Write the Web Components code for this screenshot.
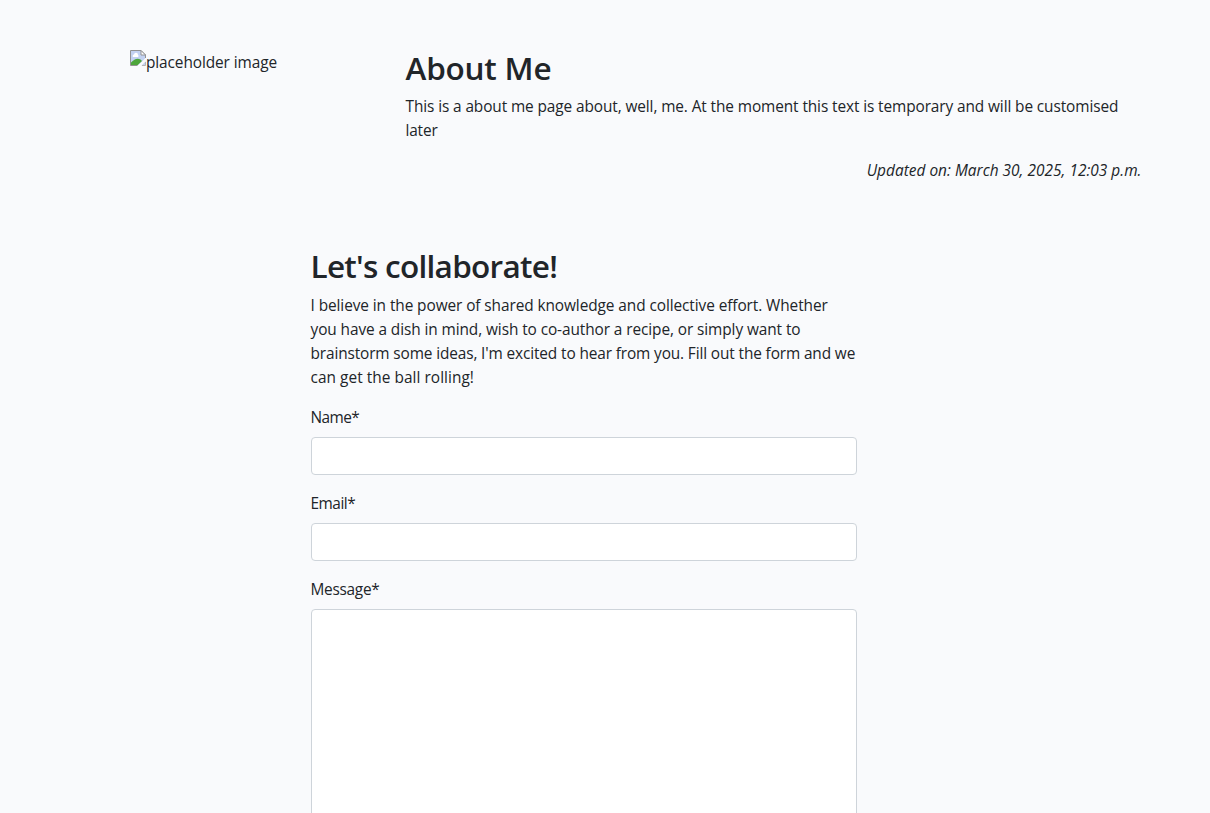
<!DOCTYPE html>
<html lang="en"><head><meta charset="utf-8"><title>About Me</title>
<style>body{margin:0;background:#f9fafc}</style></head><body>
<about-page></about-page>
<script>
const define=(name,html)=>{const t=document.createElement('template');t.innerHTML=html;
customElements.define(name,class extends HTMLElement{constructor(){super();this.attachShadow({mode:'open'}).append(t.content.cloneNode(true));}});};
define('text-line','<style>:host{display:block;white-space:nowrap}</style><slot></slot>');
define('page-heading','<style>:host{display:block;padding-top:1px;margin-bottom:7px}h2{margin:0;font-size:31.5px;line-height:38.4px;font-weight:600;white-space:nowrap}</style><h2><slot></slot></h2>');
define('missing-image',`<style>:host{display:flex;align-items:flex-start;line-height:24px;white-space:nowrap}svg{flex:none;display:block}::slotted(*){padding-top:1px}</style>
<svg width="16" height="16" viewBox="0 0 16 16"><path d="M.5.5H11L15.5 5V15.5H.5Z" fill="#c2d1f1"/><path d="M3 7a1.5 1.5 0 0 1 1-2.5 2 2 0 0 1 4 .5 1.2 1.2 0 0 1 0 2Z" fill="#fff"/><path d="M1 15V12.5Q6 7 10.500 9.500L12 11 8 15Z" fill="#4da53b"/><path d="M16 7.500V11L11 16H7L11.500 12Z" fill="#f9fafc"/><path d="M7.500 15.500H.5V.5H11L15.500 5V8" fill="none" stroke="#929292"/><path d="M11 .5V5H15.500Z" fill="#fff" stroke="#929292"/><path d="M12 15.500H15.500V12" fill="none" stroke="#b5b5b5"/></svg><slot></slot>`);
define('form-field',`<style>:host{display:block;margin-bottom:16px}label{display:block;line-height:24px;padding-top:1px;margin-bottom:7px}input,textarea{display:block;box-sizing:border-box;width:100%;height:38px;border:1px solid #ced4da;border-radius:4px;background:#fff;padding:6px 12px;margin:0;font:inherit;outline:0;resize:none}:host([multiline]) input,textarea{display:none}:host([multiline]) textarea{display:block;height:250px}</style><label><slot></slot></label><input type="text"><textarea></textarea>`);
define('about-page',`<style>
:host{display:block;box-sizing:border-box;height:813px;overflow:hidden;padding-top:48px;font:15.4px/24px "Open Sans","Noto Sans",sans-serif;color:#212529}
.intro{display:grid;grid-template-columns:275.5px 736px;padding-left:130px;height:198.4px;box-sizing:border-box}
missing-image{padding-top:2px}p{margin:0 0 15px;padding-top:1px}.updated{font-style:italic;display:flex;justify-content:flex-end;padding-top:1px}
.contact{width:546px;margin-left:310.5px}
</style>
<div class="intro"><missing-image><text-line style="letter-spacing:-.09px">placeholder image</text-line></missing-image><div><page-heading style="letter-spacing:-.2px">About Me</page-heading><p><text-line style="letter-spacing:-.1px">This is a about me page about, well, me. At the moment this text is temporary and will be customised</text-line><text-line style="letter-spacing:-.17px">later</text-line></p><text-line class="updated" style="letter-spacing:.03px">Updated on: March 30, 2025, 12:03 p.m.</text-line></div></div>
<div class="contact"><page-heading style="letter-spacing:-.72px">Let's collaborate!</page-heading><p><text-line style="letter-spacing:-.08px">I believe in the power of shared knowledge and collective effort. Whether</text-line><text-line style="letter-spacing:-.085px">you have a dish in mind, wish to co-author a recipe, or simply want to</text-line><text-line style="letter-spacing:-.125px">brainstorm some ideas, I'm excited to hear from you. Fill out the form and we</text-line><text-line style="letter-spacing:.05px">can get the ball rolling!</text-line></p><form-field style="letter-spacing:-.55px">Name*</form-field><form-field style="letter-spacing:-.48px">Email*</form-field><form-field multiline style="letter-spacing:-.28px">Message*</form-field></div>`);
</script></body></html>
